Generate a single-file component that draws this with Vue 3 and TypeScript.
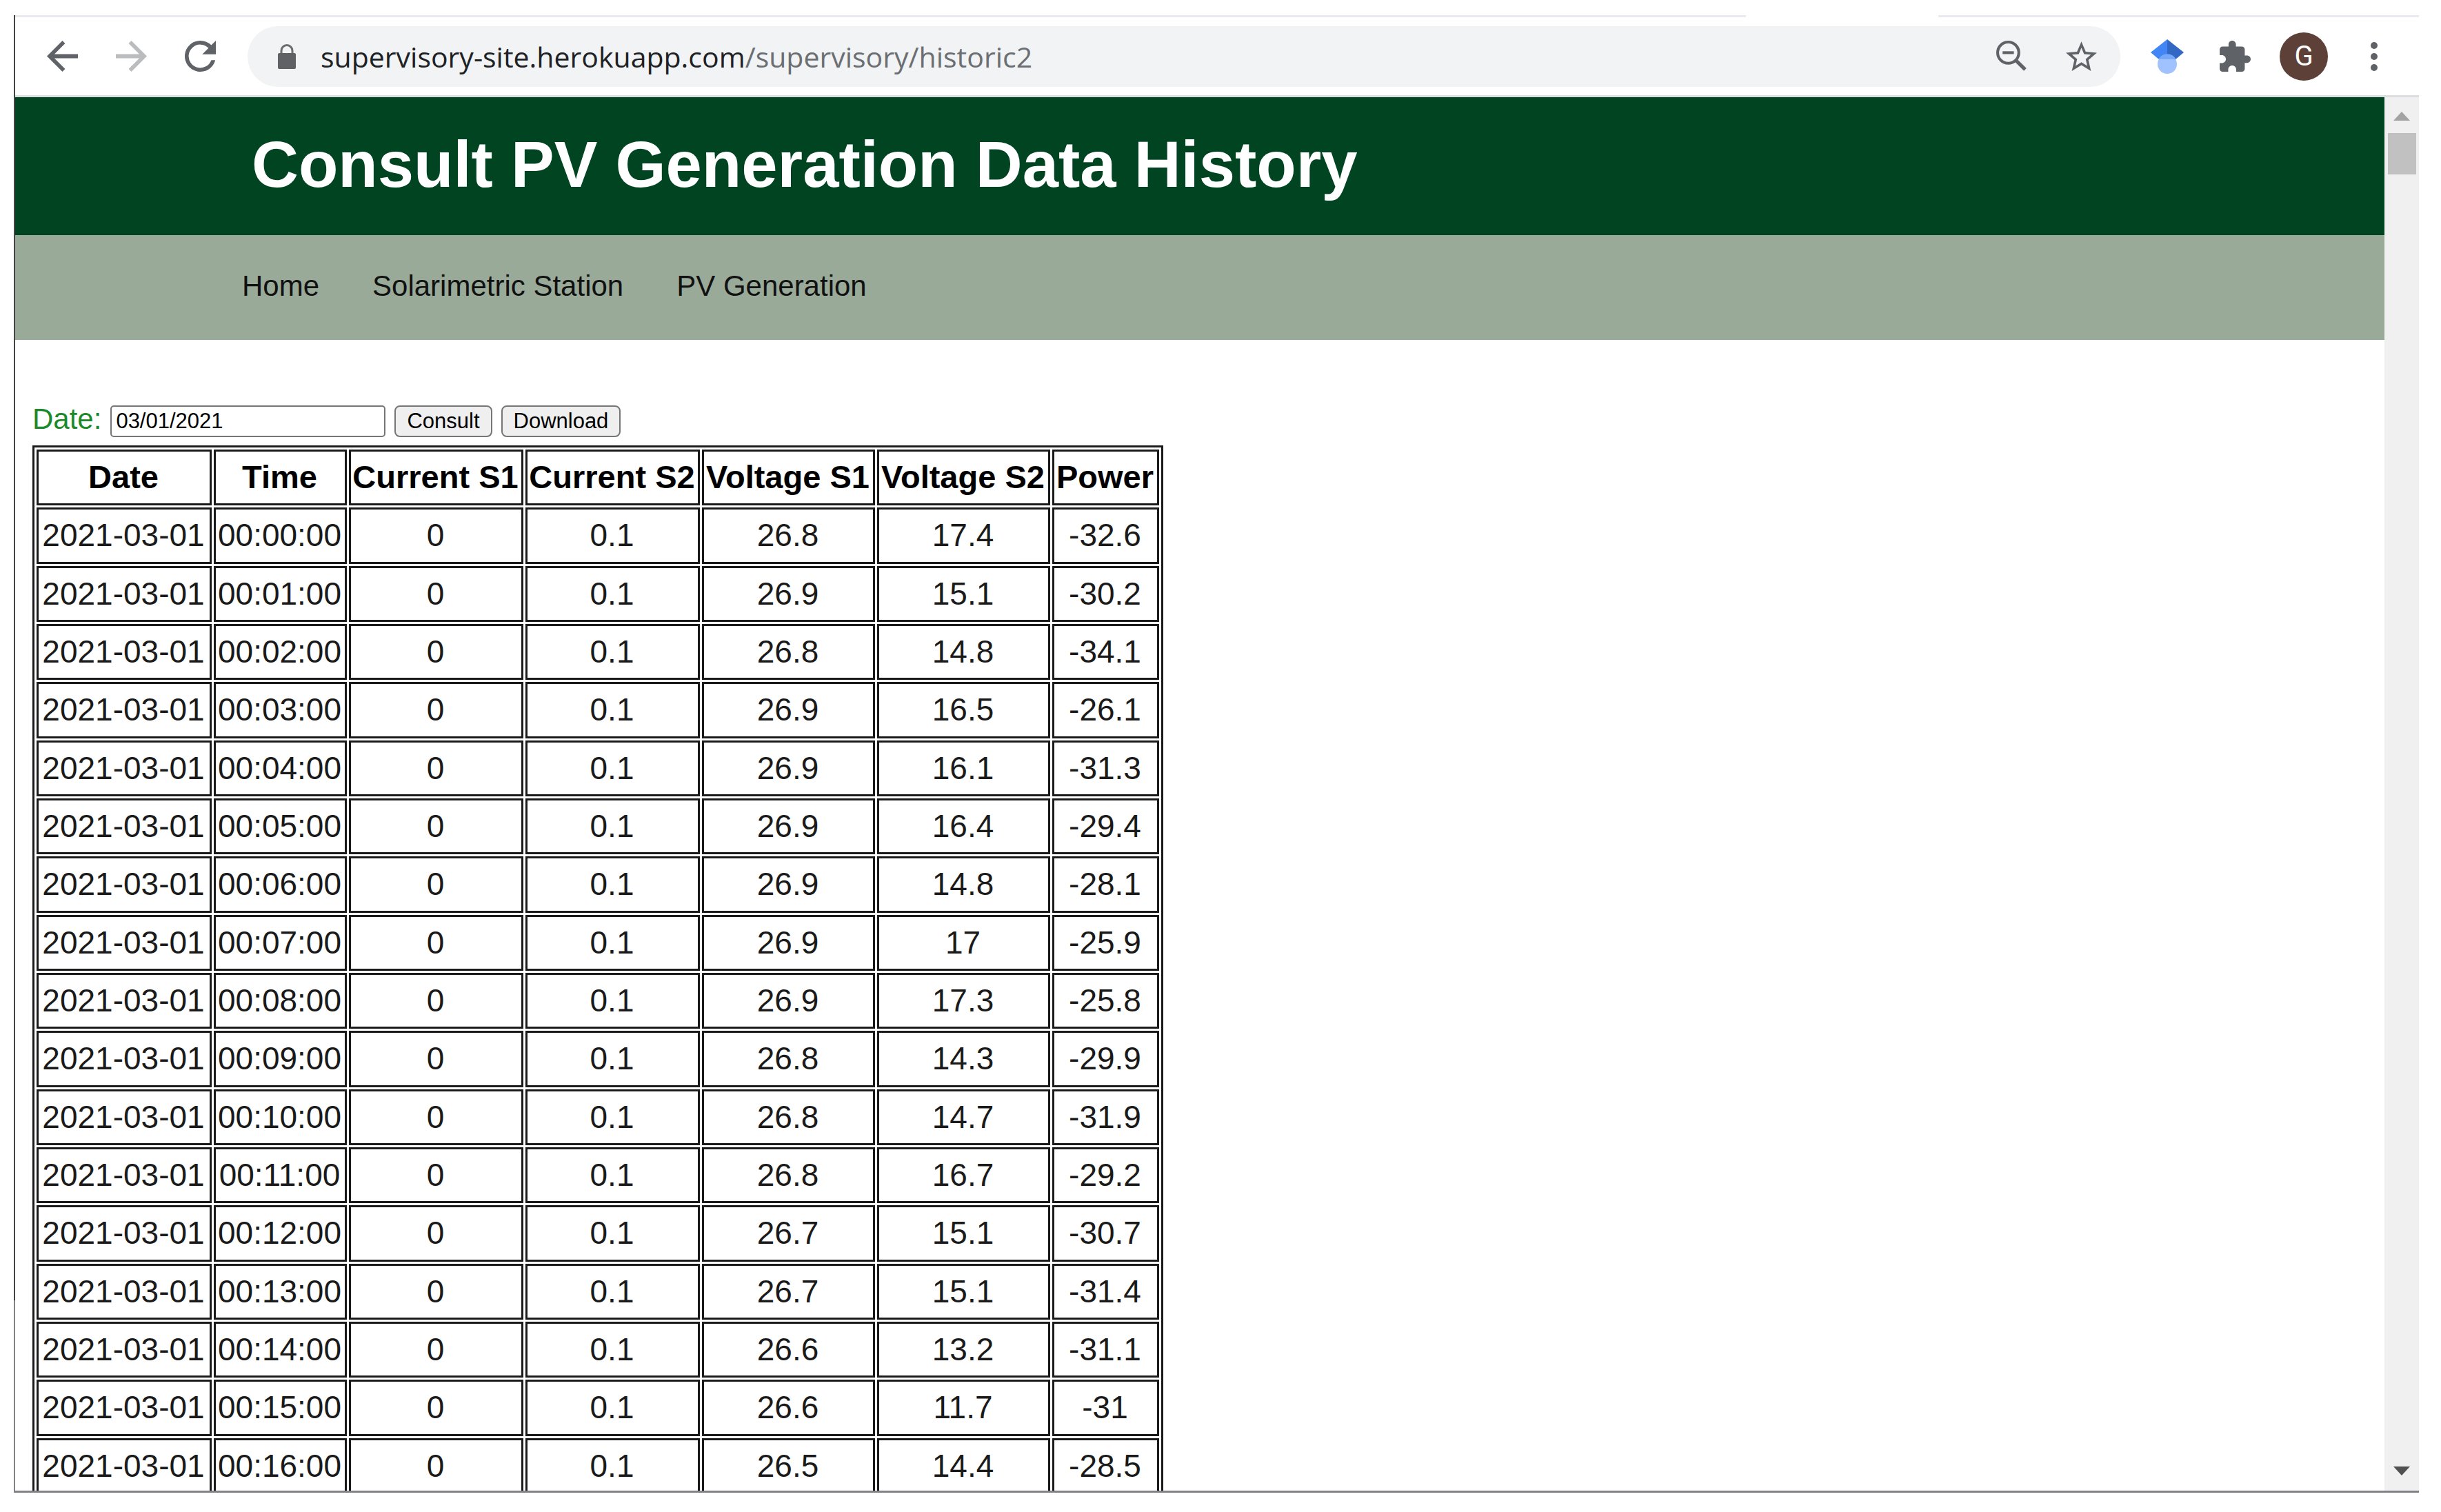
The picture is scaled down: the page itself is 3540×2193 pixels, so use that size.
<script setup lang="ts">
import { ref } from 'vue'

type Reading = [string, number, number, number, number, number]

const columns = ['Date', 'Time', 'Current S1', 'Current S2', 'Voltage S1', 'Voltage S2', 'Power']

const day = '2021-03-01'
const date = ref('03/01/2021')

const readings: Reading[] = [
  ['00:00:00', 0, 0.1, 26.8, 17.4, -32.6],
  ['00:01:00', 0, 0.1, 26.9, 15.1, -30.2],
  ['00:02:00', 0, 0.1, 26.8, 14.8, -34.1],
  ['00:03:00', 0, 0.1, 26.9, 16.5, -26.1],
  ['00:04:00', 0, 0.1, 26.9, 16.1, -31.3],
  ['00:05:00', 0, 0.1, 26.9, 16.4, -29.4],
  ['00:06:00', 0, 0.1, 26.9, 14.8, -28.1],
  ['00:07:00', 0, 0.1, 26.9, 17, -25.9],
  ['00:08:00', 0, 0.1, 26.9, 17.3, -25.8],
  ['00:09:00', 0, 0.1, 26.8, 14.3, -29.9],
  ['00:10:00', 0, 0.1, 26.8, 14.7, -31.9],
  ['00:11:00', 0, 0.1, 26.8, 16.7, -29.2],
  ['00:12:00', 0, 0.1, 26.7, 15.1, -30.7],
  ['00:13:00', 0, 0.1, 26.7, 15.1, -31.4],
  ['00:14:00', 0, 0.1, 26.6, 13.2, -31.1],
  ['00:15:00', 0, 0.1, 26.6, 11.7, -31],
  ['00:16:00', 0, 0.1, 26.5, 14.4, -28.5],
]
</script>

<template>
  <div class="window">
    <div class="tab-edge"><span></span><span></span></div>

    <div class="toolbar">
      <div class="nav-buttons">
        <button type="button" aria-label="Back">
          <svg viewBox="4 4 16 16"><path fill="#5f6368" d="M20 10.900H7.900l5.500-5.500L12 4l-8 8 8 8 1.400-1.400-5.500-5.500H20z" /></svg>
        </button>
        <button type="button" aria-label="Forward">
          <svg viewBox="4 4 16 16"><path fill="#babcbe" d="M12 4l-1.400 1.400 5.500 5.500H4v2.200h12.100l-5.500 5.500L12 20l8-8z" /></svg>
        </button>
        <button type="button" aria-label="Reload">
          <svg viewBox="4 4 16 16"><path fill="#5f6368" d="M17.650 6.350A7.960 7.960 0 0 0 12 4a8 8 0 1 0 7.730 10h-2.080A6 6 0 1 1 12 6c1.660 0 3.140.69 4.220 1.780L13 11h7V4z" /></svg>
        </button>
      </div>

      <div class="address">
        <svg class="lock" viewBox="0 0 26 36"><path d="M5 14V9.500a8 8 0 0 1 16 0V14" fill="none" stroke="#6b6d70" stroke-width="3" /><rect y="13" width="26" height="23" rx="2" fill="#5f6165" /></svg>
        <span class="url">supervisory-site.herokuapp.com<span class="path">/supervisory/historic2</span></span>
        <button type="button" aria-label="Zoom">
          <svg viewBox="0 0 44 44"><g fill="none" stroke="#5f6368" stroke-width="4"><circle cx="17" cy="17" r="15" /><path d="M28 28L41 41" stroke-width="5" /><path d="M9 17H25" /></g></svg>
        </button>
        <button type="button" aria-label="Bookmark this page">
          <svg viewBox="2 2 20 19"><path fill="#5f6368" d="M22 9.240l-7.190-.62L12 2 9.190 8.630 2 9.240l5.460 4.730L5.820 21 12 17.270 18.180 21l-1.630-7.030zM12 15.400l-3.760 2.270 1-4.280-3.320-2.880 4.380-.38L12 6.100l1.710 4.040 4.380.38-3.320 2.880 1 4.280z" /></svg>
        </button>
      </div>

      <div class="extensions">
        <button type="button" class="scholar" aria-label="Scholar">
          <svg viewBox="0 0 48 50"><path fill="#4285f4" d="M24 0L0 19l13 11h11z" /><path fill="#3367c4" d="M24 0l24 19-13 11H24z" /><rect x="10" y="22" width="28" height="28" rx="14" fill="#a0c3ff" /><path fill="#76a7fa" d="M11.500 29a14 14 0 0 1 25 0z" /></svg>
        </button>
        <button type="button" aria-label="Extensions">
          <svg viewBox="2 1 21 21"><path fill="#5f6368" d="M20.500 11H19V7c0-1.100-.9-2-2-2h-4V3.500C13 2.120 11.880 1 10.500 1S8 2.120 8 3.500V5H4c-1.100 0-1.990.9-1.990 2v3.800H3.500c1.490 0 2.700 1.210 2.700 2.700s-1.210 2.700-2.700 2.700H2V20c0 1.100.9 2 2 2h3.800v-1.500c0-1.490 1.210-2.700 2.700-2.700s2.700 1.210 2.700 2.700V22H17c1.100 0 2-.9 2-2v-4h1.500c1.380 0 2.500-1.120 2.500-2.500S21.880 11 20.500 11z" /></svg>
        </button>
        <button type="button" class="avatar" aria-label="Profile">G</button>
        <button type="button" class="menu" aria-label="Menu">
          <svg viewBox="0 0 10 42"><g fill="#5f6368"><circle cx="5" cy="5" r="5" /><circle cx="5" cy="21" r="5" /><circle cx="5" cy="37" r="5" /></g></svg>
        </button>
      </div>
    </div>

    <div class="viewport">
      <div class="page">
        <header><h1>Consult PV Generation Data History</h1></header>
        <nav>
          <a href="#home">Home</a>
          <a href="#station">Solarimetric Station</a>
          <a href="#generation">PV Generation</a>
        </nav>
        <main>
          <form @submit.prevent>
            <label for="date">Date:</label>
            <input id="date" v-model="date" type="text" />
            <button type="submit">Consult</button>
            <button type="button">Download</button>
          </form>
          <table>
            <colgroup>
              <col class="c-date" /><col class="c-time" /><col class="c-current" /><col class="c-current" />
              <col class="c-voltage" /><col class="c-voltage" /><col class="c-power" />
            </colgroup>
            <thead>
              <tr><th v-for="name in columns" :key="name" scope="col">{{ name }}</th></tr>
            </thead>
            <tbody>
              <tr v-for="row in readings" :key="row[0]">
                <td>{{ day }}</td>
                <td v-for="(value, i) in row" :key="i">{{ value }}</td>
              </tr>
            </tbody>
          </table>
        </main>
      </div>
      <div class="scrollbar">
        <svg viewBox="0 0 24 13"><path fill="#a3a3a3" d="M12 0l12 13H0z" /></svg>
        <div class="thumb"></div>
        <svg class="down" viewBox="0 0 24 13"><path fill="#505050" d="M0 0h24L12 13z" /></svg>
      </div>
    </div>
  </div>
</template>

<style>
body {
  margin: 0;
  background: #fff;
}
</style>

<style scoped>
* {
  box-sizing: border-box;
}

.window {
  display: flex;
  flex-direction: column;
  height: calc(100vh - 50px);
  margin: 22px 32px 28px 20px;
  padding: 0 0 3px 2px;
  overflow: hidden;
  background: linear-gradient(#444 0 87%, #808286 87%);
  font-family: "Liberation Sans", Arial, sans-serif;
}

.tab-edge {
  display: flex;
  flex: none;
  justify-content: space-between;
  height: 3px;
  background: #fff;
}

.tab-edge span {
  width: 20%;
  background: #e8eaed;
}

.tab-edge span:first-child {
  width: 72%;
}

.toolbar {
  display: flex;
  flex: none;
  align-items: center;
  height: 116px;
  padding: 0 60px 0 46px;
  background: #fff;
  border-bottom: 3px solid #dcdee1;
}

.toolbar button {
  padding: 0;
  border: 0;
  background: none;
}

.toolbar svg {
  display: block;
  width: 45px;
  height: 45px;
}

.nav-buttons {
  display: flex;
  gap: 55px;
  margin-right: 46px;
}

.address {
  display: flex;
  flex: 1;
  align-items: center;
  gap: 56px;
  height: 88px;
  padding: 0 34px 0 44px;
  border-radius: 44px;
  background: #f1f3f4;
}

.toolbar .lock {
  width: 26px;
  height: 36px;
  margin-right: -20px;
}

.url {
  flex: 1;
  color: #202124;
  font: 41px/60px "Open Sans", "Noto Sans", sans-serif;
}

.path {
  color: #6b6e72;
}

.extensions {
  display: flex;
  align-items: center;
  margin-left: 44px;
  gap: 42px;
}

.toolbar .scholar {
  margin-right: 10px;
}

.toolbar .scholar svg {
  width: 48px;
  height: 50px;
}

.toolbar .avatar {
  width: 70px;
  height: 70px;
  border-radius: 50%;
  background: #5d4037;
  color: #fff;
  font: 40px/70px Roboto, sans-serif;
}

.toolbar .menu {
  margin-left: 20px;
}

.toolbar .menu svg {
  width: 10px;
  height: 42px;
}

.viewport {
  display: flex;
  flex: 1;
  min-height: 0;
}

.page {
  flex: 1;
  overflow: hidden;
  background: #fff;
}

header {
  height: 200px;
  padding: 43px 343px;
  background: #004422;
}

h1 {
  margin: 0;
  color: #fff;
  font-size: 94px;
  line-height: 110px;
}

nav {
  display: flex;
  gap: 77px;
  height: 152px;
  padding: 49px 329px;
  background: #99aa99;
}

nav a {
  color: #111;
  font-size: 42px;
  line-height: 50px;
  text-decoration: none;
}

main {
  padding: 88px 25px 0;
}

form {
  display: flex;
  align-items: center;
  height: 60px;
  margin-bottom: 5px;
  gap: 13px;
}

label {
  padding-bottom: 6px;
  color: #1c8a2a;
  font-size: 42px;
  line-height: 50px;
}

form input,
form button {
  height: 46px;
  border: 2px solid #767676;
  border-radius: 5px;
  color: #000;
  font: 31px/36px "Liberation Sans", Arial, sans-serif;
}

form input {
  width: 399px;
  padding: 0 6px;
  background: #fff;
}

form button {
  padding: 0 16px;
  border-radius: 8px;
  background: #efefef;
}

table {
  width: 1640px;
  border: 3px solid #1a1a1a;
  border-spacing: 3px;
  table-layout: fixed;
  font-size: 46px;
  line-height: 54px;
}

.c-date { width: 254px; }
.c-time { width: 193px; }
.c-current { width: 253px; }
.c-voltage { width: 251px; }
.c-power { width: 155px; }

th,
td {
  height: 81px;
  padding: 0 2px 2px 0;
  border: 3px solid #1a1a1a;
  text-align: center;
  white-space: nowrap;
}

tbody tr:nth-child(3n + 1) td {
  height: 82px;
}

th {
  color: #000;
  font-size: 47px;
}

td {
  color: #1a1a1a;
}

.scrollbar {
  display: flex;
  flex: none;
  flex-direction: column;
  align-items: center;
  width: 50px;
  padding: 21px 0 22px;
  background: #f0f0f0;
}

.scrollbar svg {
  flex: none;
  width: 24px;
  height: 13px;
}

.thumb {
  width: 41px;
  height: 60px;
  margin-top: 18px;
  background: #c1c1c1;
}

.scrollbar .down {
  margin-top: auto;
}
</style>
